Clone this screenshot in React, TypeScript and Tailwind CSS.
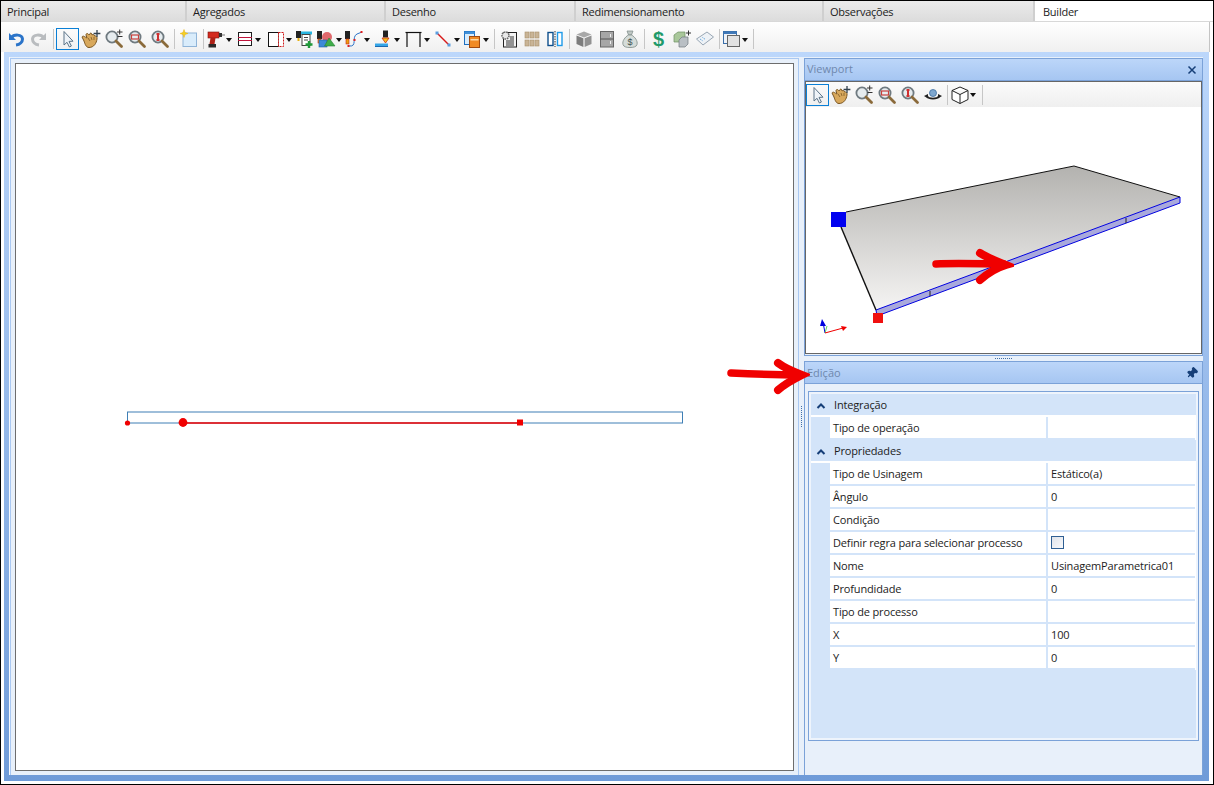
import type { ReactNode } from "react";
import { Pin } from "lucide-react";

const ICON = "block h-5 w-5 shrink-0";

function Svg({ children }: { children: ReactNode }) {
  return (
    <svg viewBox="0 0 20 20" className={ICON}>
      {children}
    </svg>
  );
}

function Undo({ gray }: { gray?: boolean }) {
  const color = gray ? "#b9bcbf" : "#2b74c9";
  return (
    <Svg>
      <g transform={gray ? "translate(20 0) scale(-1 1)" : undefined}>
        <path d="M3 4 L3 11 L10 11 Z" fill={color} />
        <path
          d="M5 9 C8 5 16 5 16.5 10 C16.5 13 14 15.5 10 16"
          fill="none"
          stroke={color}
          strokeWidth="3"
        />
      </g>
    </Svg>
  );
}

function Cursor() {
  return (
    <Svg>
      <path
        d="M6 2.5 L6 16 L9 13.3 L11.4 18 L13.4 17 L11 12.4 L15 12.2 Z"
        fill="#eef3f8"
        stroke="#5c7488"
        strokeWidth="1"
      />
    </Svg>
  );
}

function Hand() {
  return (
    <Svg>
      <path
        d="M1 8 C2 6 4 8 6 9 L5 6 C5 4 7 4 8 6 L9 4.5 C10 3.5 11 4.5 11 6 C12 5 13.5 5.5 13.5 7 C15 6.5 16.5 8 16 10 C15.5 14 13 18.5 8 18.5 C5 18.5 4 15 3 12 Z"
        fill="#d8a85c"
        stroke="#7a5622"
        strokeWidth="1"
      />
      <path d="M7 9 L9 12 M10 8 L11 11 M13 8 L13 11" stroke="#8f6a30" strokeWidth="1" />
      <path d="M16 1 V8 M12.6 4.5 H19.4" stroke="#33424f" strokeWidth="1.3" />
    </Svg>
  );
}

function Lens({ children }: { children?: ReactNode }) {
  return (
    <Svg>
      <circle cx="8" cy="8" r="5.6" fill="#e6ecef" stroke="#6f7a80" strokeWidth="1.8" />
      <path d="M12 12 L17.5 17.5" stroke="#8a6a3a" strokeWidth="2.8" strokeLinecap="round" />
      {children}
    </Svg>
  );
}

function ZoomPlus() {
  return (
    <Lens>
      <path d="M13 3 H18.5 M15.7 0.5 V5.5 M13.5 7.5 H18.5" stroke="#333" strokeWidth="1" />
    </Lens>
  );
}

function ZoomBox() {
  return (
    <Lens>
      <rect x="4.5" y="6" width="7" height="4" fill="none" stroke="#c8403c" strokeWidth="1.2" />
    </Lens>
  );
}

function ZoomFit() {
  return (
    <Lens>
      <path d="M8 4 V12" stroke="#cf3030" strokeWidth="2" />
      <path d="M6 5 H10 M6 11 H10" stroke="#cf3030" strokeWidth="1" />
    </Lens>
  );
}

function NewSheet() {
  return (
    <Svg>
      <rect x="4" y="4" width="13.5" height="13.5" fill="#d9ecfb" stroke="#8fb4d8" />
      <path d="M5 0.5 L6 3.5 L9 4.5 L6 5.5 L5 8.5 L4 5.5 L1 4.5 L4 3.5 Z" fill="#f5d020" stroke="#e8b010" strokeWidth="0.5" />
    </Svg>
  );
}

function Drill() {
  return (
    <Svg>
      <rect x="2" y="3" width="11" height="6" fill="#d42a1e" stroke="#7a1510" strokeWidth="0.6" />
      <rect x="13" y="4" width="3" height="4" fill="#333" />
      <path d="M16 6 H19" stroke="#777" strokeWidth="1" />
      <path d="M4.5 9 H9.5 L8.5 15 H3.5 Z" fill="#b02218" />
      <rect x="2.5" y="15" width="7.5" height="3.5" fill="#2a2a2a" />
    </Svg>
  );
}

function Bands() {
  return (
    <Svg>
      <rect x="3.5" y="3.5" width="13" height="13" fill="#fff" stroke="#1e1e1e" />
      <path d="M3 8.5 H17 M3 11.5 H17" stroke="#c0143c" strokeWidth="1.2" />
    </Svg>
  );
}

function Side() {
  return (
    <Svg>
      <rect x="2.5" y="3.5" width="10" height="14" fill="#fff" stroke="#111" />
      <rect x="12.5" y="3.5" width="5" height="14" fill="#fff" stroke="#d01818" strokeDasharray="2 1" />
    </Svg>
  );
}

function ToolList() {
  return (
    <Svg>
      <rect x="1" y="2" width="5" height="7" fill="#222" />
      <rect x="2.5" y="9" width="2" height="3" fill="#e8b010" />
      <rect x="6" y="2.5" width="11" height="3" fill="#27b4e0" />
      <rect x="7" y="5.5" width="8" height="11" fill="#fff" stroke="#444" />
      <path d="M9 8.5 H13 M9 11 H13" stroke="#444" strokeWidth="1" />
      <path d="M14 12 V19 M10.5 15.5 H17.5" stroke="#1f9a3a" strokeWidth="2.4" />
    </Svg>
  );
}

function ToolShapes() {
  return (
    <Svg>
      <rect x="1" y="2" width="5" height="8" fill="#222" />
      <rect x="2" y="10" width="3" height="4" fill="#e8a010" stroke="#d02010" strokeWidth="0.6" />
      <circle cx="11" cy="8" r="5" fill="#e0686c" />
      <rect x="3" y="11" width="8" height="7" fill="#3d8ad8" stroke="#1d5ea8" strokeWidth="0.6" />
      <path d="M13 9 L19 17 H8.5 Z" fill="#3fae4a" stroke="#2a8035" strokeWidth="0.6" />
    </Svg>
  );
}

function ToolCurve() {
  return (
    <Svg>
      <rect x="1" y="2" width="5" height="8" fill="#222" />
      <rect x="2" y="10" width="3" height="5" fill="#e8a010" stroke="#d02010" strokeWidth="0.6" />
      <path d="M5 17 C14 18 7 8 13 5 L18 3" fill="none" stroke="#2b74c9" strokeWidth="1" />
      <rect x="3.5" y="16" width="2" height="2" fill="#e02020" />
      <rect x="9.5" y="10" width="2" height="2" fill="#e02020" />
      <rect x="16.5" y="2" width="2" height="2" fill="#e02020" />
    </Svg>
  );
}

function ToolCut() {
  return (
    <Svg>
      <rect x="9" y="1.5" width="5" height="7" fill="#222" />
      <path d="M8 9 H15 L11.5 14 Z" fill="#f0c020" stroke="#d03010" strokeWidth="0.8" />
      <rect x="1" y="14.5" width="13" height="3" fill="#35a6e8" />
      <path d="M1 17.5 H14" stroke="#1d6ab0" strokeWidth="1" />
    </Svg>
  );
}

function Bracket() {
  return (
    <Svg>
      <path d="M3 18 V3.5 M16 18 V3.5" fill="none" stroke="#111" strokeWidth="1.2" />
      <path d="M1.5 3.5 H17.5" stroke="#111" strokeWidth="1.2" />
    </Svg>
  );
}

function Diagonal() {
  return (
    <Svg>
      <path d="M3 4 L15 16" stroke="#d81818" strokeWidth="1.4" />
      <rect x="1.5" y="2.5" width="3" height="3" fill="#5a9ee0" />
      <rect x="13.5" y="14.5" width="3" height="3" fill="#5a9ee0" />
    </Svg>
  );
}

function WinBox() {
  return (
    <Svg>
      <rect x="1.5" y="2.5" width="10" height="13" fill="#d8ecfc" stroke="#1e6fc0" />
      <rect x="1.5" y="2.5" width="10" height="2.5" fill="#3f8fd8" />
      <rect x="6.5" y="7.5" width="10" height="11" fill="#f08a24" stroke="#a04a10" />
      <rect x="7.5" y="10" width="8" height="1.5" fill="#fbd9a8" />
    </Svg>
  );
}

function GearDoc() {
  return (
    <Svg>
      <rect x="4.5" y="3.5" width="13" height="14.5" fill="#f4f4f4" stroke="#222" />
      <path d="M7 12 H15 M7 14 H15 M7 16 H15 M11 8 H15 M11 10 H15" stroke="#333" strokeWidth="1" />
      <circle cx="6.5" cy="6.5" r="3.5" fill="#e8e8e8" stroke="#666" strokeWidth="1.6" strokeDasharray="1.6 0.8" />
    </Svg>
  );
}

function Blocks() {
  return (
    <Svg>
      <g fill="#c9b496" stroke="#a8906c" strokeWidth="0.6">
        <rect x="3" y="3" width="4" height="6" />
        <rect x="8" y="3" width="4" height="6" />
        <rect x="13" y="3" width="4" height="6" />
        <rect x="3" y="11" width="4" height="6" />
        <rect x="8" y="11" width="4" height="6" />
        <rect x="13" y="11" width="4" height="6" />
      </g>
    </Svg>
  );
}

function Bars() {
  return (
    <Svg>
      <rect x="3" y="3.5" width="5" height="13" fill="#fff" stroke="#0f4f8c" strokeWidth="1.4" />
      <path d="M10 2 V18" stroke="#333" strokeWidth="1" strokeDasharray="1.5 1" />
      <rect x="12.5" y="3.5" width="4.5" height="13" fill="#fff" stroke="#1f9ae8" strokeWidth="1.4" />
    </Svg>
  );
}

function GrayCube() {
  return (
    <Svg>
      <path d="M10 2.5 L17.5 5.5 L10 8.5 L2.5 5.5 Z" fill="#a8a8a8" />
      <path d="M2.5 6.5 L9.4 9.3 V18 L2.5 15 Z" fill="#7d7d7d" />
      <path d="M17.5 6.5 L10.6 9.3 V18 L17.5 15 Z" fill="#929292" />
    </Svg>
  );
}

function Doors() {
  return (
    <Svg>
      <rect x="3.5" y="2.5" width="13" height="15.5" fill="#a6a6a6" stroke="#666" />
      <path d="M3.5 10 H16.5" stroke="#555" strokeWidth="1" />
      <path d="M13.5 5 V8 M13.5 12 V15" stroke="#eee" strokeWidth="1" />
    </Svg>
  );
}

function MoneyBag() {
  return (
    <Svg>
      <path d="M7 2 H13 L11.5 6 H8.5 Z" fill="#bfc7c4" stroke="#7c8a86" strokeWidth="0.7" />
      <path d="M8.5 6 H11.5 C15 8 18 12 17 15.5 C16.5 18 13 18.5 10 18.5 C7 18.5 3.5 18 3 15.5 C2 12 5 8 8.5 6 Z" fill="#d5dcd9" stroke="#7c8a86" strokeWidth="0.8" />
      <text x="10" y="16" textAnchor="middle" fontSize="9" fontFamily="Liberation Sans" fill="#44514d">
        $
      </text>
    </Svg>
  );
}

function Dollar() {
  return (
    <span className="text-[20px] font-bold leading-[22px] text-[#1f9a6a] [font-family:'Liberation_Sans',sans-serif]">
      $
    </span>
  );
}

function Prisms() {
  return (
    <Svg>
      <path d="M2 6 L6 3 H13 V10 L9 13 H2 Z" fill="#a9c79a" stroke="#6e8f62" strokeWidth="0.7" />
      <path d="M7 11 L10 8 H16 V15 L13 18 H7 Z" fill="#b9bfc4" stroke="#70787f" strokeWidth="0.7" />
      <path d="M16.5 1.5 V6.5 M14 4 H19" stroke="#333" strokeWidth="1" />
    </Svg>
  );
}

function Tag() {
  return (
    <Svg>
      <path d="M1.5 10 L12 3 L18.5 8 L8 16 Z" fill="#eef2f6" stroke="#98a6b4" strokeWidth="1" />
      <path d="M5 10 L8 12 M7.5 8.5 L10.5 10.5" stroke="#4f9ad8" strokeWidth="1" strokeDasharray="1 1" />
    </Svg>
  );
}

function Windows() {
  return (
    <Svg>
      <rect x="1.5" y="2.5" width="13" height="12" fill="#eef2f8" stroke="#3a6ea8" />
      <rect x="1.5" y="2.5" width="13" height="2.5" fill="#3f78b8" />
      <rect x="5.5" y="6.5" width="12" height="11" fill="#e2e2e2" stroke="#666" />
    </Svg>
  );
}

function Cube() {
  return (
    <Svg>
      <path d="M10 2 L18 5.5 V14.5 L10 18.5 L2 14.5 V5.5 Z M2 5.5 L10 9.5 L18 5.5 M10 9.5 V18.5" fill="#fff" stroke="#222" strokeWidth="1" />
    </Svg>
  );
}

function Orbit() {
  return (
    <Svg>
      <circle cx="10" cy="8" r="3.5" fill="#7ea7cf" stroke="#3f6f9f" strokeWidth="0.8" />
      <path d="M3.5 11 C6 14.5 14 14.5 16.5 11" fill="none" stroke="#222" strokeWidth="1.8" />
      <path d="M1 11 L5 9 L5 13.5 Z M19 11 L15 9 L15 13.5 Z" fill="#222" />
    </Svg>
  );
}

function Caret() {
  return <span className="mt-[1px] h-0 w-0 shrink-0 border-x-[3.5px] border-t-[4px] border-x-transparent border-t-[#111]" />;
}

function Tool({ icon, active }: { icon: ReactNode; active?: boolean }) {
  return (
    <div
      className={
        active
          ? "flex h-[22px] w-[23px] shrink-0 items-center justify-center border border-[#0a7fd6]"
          : "flex h-[22px] w-[23px] shrink-0 items-center justify-center"
      }
    >
      {icon}
    </div>
  );
}

function Drop({ icon, width }: { icon: ReactNode; width: string }) {
  return (
    <div className={`flex h-[22px] shrink-0 items-center ${width}`}>
      {icon}
      <Caret />
    </div>
  );
}

function Sep() {
  return (
    <div className="flex w-[6px] shrink-0 justify-center">
      <div className="h-[20px] w-px bg-[#c6c6c6]" />
    </div>
  );
}

function Tab({ label, width, active }: { label: string; width: string; active?: boolean }) {
  return (
    <div
      className={
        active
          ? `flex h-full items-center bg-white pl-[8px] pt-[2px] tracking-[-0.25px] ${width}`
          : `flex h-full items-center border-r-2 border-r-[#cfcfcf] bg-gradient-to-b from-[#ebebeb] to-[#dcdcdc] pl-[6px] pt-[2px] tracking-[-0.25px] ${width}`
      }
    >
      {label}
    </div>
  );
}

function TitleBar({ title, right, low }: { title: string; right: ReactNode; low?: boolean }) {
  return (
    <div
      className={
        low
          ? "flex h-[23px] shrink-0 items-center justify-between border border-[#7ba2d8] bg-gradient-to-b from-[#bcd6f9] to-[#a6c6f2] pl-[2px] pr-[4px] pt-[2px] text-[#6f88ad]"
          : "flex h-[23px] shrink-0 items-center justify-between border border-[#7ba2d8] bg-gradient-to-b from-[#bcd6f9] to-[#a6c6f2] pl-[2px] pr-[4px] text-[#6f88ad]"
      }
    >
      <span>{title}</span>
      {right}
    </div>
  );
}

function Row({ name, value }: { name: string; value?: ReactNode }) {
  return (
    <div className="flex h-[23px] pl-[19px]">
      <div className="flex w-[218px] items-center border-r-2 border-b-2 border-[#d3e4f9] bg-white pl-[3px] pt-[2px] tracking-[-0.16px]">{name}</div>
      <div className="flex flex-1 items-center border-b-2 border-[#d3e4f9] bg-white pl-[3px] pt-[2px] tracking-[-0.14px]">{value}</div>
      <div className="w-px bg-white" />
    </div>
  );
}

function Group({ name }: { name: string }) {
  return (
    <div className="flex h-[23px] items-center border-b-2 border-white bg-[#d3e4f9] pt-[2px]">
      <svg viewBox="0 0 10 8" className="ml-[5px] h-[8px] w-[10px]">
        <path d="M1.5 6 L5 2.5 L8.5 6" fill="none" stroke="#163f78" strokeWidth="2" />
      </svg>
      <span className="ml-[8px] tracking-[-0.16px]">{name}</span>
    </div>
  );
}

function Canvas() {
  return (
    <svg viewBox="16 64 777 705" className="block h-full w-full">
      <rect x="127.5" y="411.5" width="555" height="11" fill="none" stroke="#3f7fb5" strokeWidth="1" />
      <path d="M183 422.5 H520" stroke="#f00000" strokeWidth="1.4" />
      <circle cx="127.5" cy="422.5" r="2.6" fill="#f00000" />
      <circle cx="183" cy="422" r="4.4" fill="#f00000" />
      <rect x="517" y="419" width="6" height="6" fill="#f00000" />
    </svg>
  );
}

function Board() {
  return (
    <svg viewBox="806 107 395 246" className="block h-full w-full">
      <defs>
        <linearGradient id="plate" x1="0" y1="0" x2="0" y2="1">
          <stop offset="0" stopColor="#b3b2af" />
          <stop offset="1" stopColor="#f5f4f3" />
        </linearGradient>
      </defs>
      <path d="M846 212 L1074 166 L1180 197 L876 310 L841 227 Z" fill="url(#plate)" />
      <path d="M876 310 L1180 197 V203 L877 316 Z" fill="#a9a9dc" stroke="#0000e0" strokeWidth="1" />
      <path d="M846 212 L1074 166 L1180 197" fill="none" stroke="#111" strokeWidth="1" />
      <path d="M841 227 L876 310" stroke="#111" strokeWidth="1.4" />
      <path d="M930 291 V296 M1126 218 V223" stroke="#222" strokeWidth="1" />
      <rect x="831" y="212" width="15" height="15" fill="#0000f0" />
      <rect x="873" y="313" width="10" height="10" fill="#f01010" />
      <path d="M825 333 L823 322" stroke="#0000e0" strokeWidth="1" />
      <path d="M820 326 L822 319 L826 326 Z" fill="#0000e0" />
      <path d="M825 333 L827 326" stroke="#60d060" strokeWidth="1" />
      <path d="M825 333 L843 328" stroke="#f00000" strokeWidth="1" />
      <path d="M841 326 L847 327 L843 331 Z" fill="#f00000" />
    </svg>
  );
}

function Arrow({ className, shaft, head }: { className: string; shaft: string; head: string }) {
  return (
    <svg viewBox="0 0 84 38" className={className}>
      <path d={shaft} fill="none" stroke="#f00000" strokeWidth="7.5" strokeLinecap="round" />
      <path d={head} fill="none" stroke="#f00000" strokeWidth="8" strokeLinecap="round" strokeLinejoin="miter" />
    </svg>
  );
}

export default function App() {
  return (
    <div className="relative h-[785px] w-[1214px] overflow-hidden border border-black bg-white text-[11px] text-[#1c1c1c] [font-family:'Open_Sans',sans-serif]">
      <div className="flex h-[21px] border-b border-[#d8d8d8]">
        <Tab label="Principal" width="w-[186px]" />
        <Tab label="Agregados" width="w-[199px]" />
        <Tab label="Desenho" width="w-[190px]" />
        <Tab label="Redimensionamento" width="w-[248px]" />
        <Tab label="Observações" width="w-[211px]" />
        <Tab label="Builder" width="flex-1" active />
      </div>

      <div className="mr-[3px] flex h-[30px] items-center border-r border-[#c4c4c4] bg-gradient-to-b from-white to-[#f0f0f0] pl-[3px] pt-[4px]">
        <Tool icon={<Undo />} />
        <Tool icon={<Undo gray />} />
        <Sep />
        <Tool icon={<Cursor />} active />
        <Tool icon={<Hand />} />
        <Tool icon={<ZoomPlus />} />
        <Tool icon={<ZoomBox />} />
        <Tool icon={<ZoomFit />} />
        <Sep />
        <Tool icon={<NewSheet />} />
        <Sep />
        <Drop icon={<Drill />} width="w-[29px]" />
        <Drop icon={<Bands />} width="w-[31px]" />
        <Drop icon={<Side />} width="w-[27px]" />
        <Tool icon={<ToolList />} />
        <Drop icon={<ToolShapes />} width="w-[28px]" />
        <Drop icon={<ToolCurve />} width="w-[30px]" />
        <Drop icon={<ToolCut />} width="w-[30px]" />
        <Drop icon={<Bracket />} width="w-[30px]" />
        <Drop icon={<Diagonal />} width="w-[29px]" />
        <Drop icon={<WinBox />} width="w-[28px]" />
        <Sep />
        <Tool icon={<GearDoc />} />
        <Tool icon={<Blocks />} />
        <Tool icon={<Bars />} />
        <Sep />
        <Tool icon={<GrayCube />} />
        <Tool icon={<Doors />} />
        <Tool icon={<MoneyBag />} />
        <Sep />
        <Tool icon={<Dollar />} />
        <Tool icon={<Prisms />} />
        <Tool icon={<Tag />} />
        <Sep />
        <Drop icon={<Windows />} width="w-[28px]" />
        <Sep />
      </div>

      <div className="ml-[3px] mr-[3px] h-[729px] w-[1205px] bg-gradient-to-b from-[#bcd7fb] to-[#6f9bd8] pb-[6px] pl-[5px] pr-[6px] pt-[5px]">
        <div className="flex h-full border-l border-[#f4f8fe] bg-[#e8f0fa] pt-px">
          <div className="h-[717px] w-[789px] border border-b-0 border-[#a9c8f2] p-[4px]">
            <div className="h-full border border-[#6d6d6d] bg-white">
              <Canvas />
            </div>
          </div>

          <div className="flex w-[5px] items-center justify-center">
            <div className="h-[21px] w-[2px] border-l border-dotted border-[#3f6fa8]" />
          </div>

          <div className="flex w-[399px] flex-col">
            <TitleBar
              title="Viewport"
              right={
                <svg viewBox="0 0 10 10" className="mr-[1px] h-[10px] w-[10px]">
                  <path d="M1.5 1.5 L8.5 8.5 M8.5 1.5 L1.5 8.5" stroke="#163f78" strokeWidth="1.5" />
                </svg>
              }
            />
            <div className="flex h-[275px] flex-col border-x border-b border-x-[#7ba2d8] border-b-[#7ba2d8]">
              <div className="flex h-[273px] flex-col border-x border-y border-[#666] bg-white">
                <div className="flex h-[25px] shrink-0 items-center bg-gradient-to-b from-[#fbfbfb] to-[#efefef]">
                  <Tool icon={<Cursor />} active />
                  <Tool icon={<Hand />} />
                  <Tool icon={<ZoomPlus />} />
                  <Tool icon={<ZoomBox />} />
                  <Tool icon={<ZoomFit />} />
                  <Tool icon={<Orbit />} />
                  <Sep />
                  <Drop icon={<Cube />} width="w-[29px]" />
                  <Sep />
                </div>
                <div className="min-h-0 flex-1">
                  <Board />
                </div>
              </div>
            </div>
            <div className="flex h-[5px] shrink-0 items-center justify-center">
              <div className="h-[2px] w-[17px] border-t border-dotted border-[#3f6fa8]" />
            </div>
            <TitleBar
              low
              title="Edição"
              right={<Pin size={12} strokeWidth={2.4} fill="currentColor" className="mb-[2px] rotate-45 text-[#163f78]" />}
            />
            <div className="flex-1 border-x border-[#7ba2d8] px-[3px] pt-[7px]">
              <div className="h-[350px] border border-[#7ba2d8]">
                <div className="h-full border-2 border-[#eef4fc] bg-[#d3e4f9]">
                  <Group name="Integração" />
                  <Row name="Tipo de operação" />
                  <Group name="Propriedades" />
                  <Row name="Tipo de Usinagem" value="Estático(a)" />
                  <Row name="Ângulo" value="0" />
                  <Row name="Condição" />
                  <Row
                    name="Definir regra para selecionar processo"
                    value={<span className="mb-[2px] h-[13px] w-[13px] border border-[#2f5f93] bg-gradient-to-br from-[#dfe3ea] to-[#f8f9fb]" />}
                  />
                  <Row name="Nome" value="UsinagemParametrica01" />
                  <Row name="Profundidade" value="0" />
                  <Row name="Tipo de processo" />
                  <Row name="X" value="100" />
                  <Row name="Y" value="0" />
                </div>
              </div>
            </div>
          </div>
        </div>
      </div>

      {/* setas vermelhas por cima da tela */}
      <Arrow
        className="absolute left-[725px] top-[356px] h-[38px] w-[84px]"
        shaft="M5 16 C25 17 55 18 75 18"
        head="M52 6 C60 12 68 15 76 18 C68 22 60 26 52 33"
      />
      <Arrow
        className="absolute left-[929px] top-[246px] h-[38px] w-[84px]"
        shaft="M6 17 C25 16 55 17 74 17"
        head="M50 6 C58 11 66 14 76 18 C66 21 58 26 50 33"
      />
    </div>
  );
}
